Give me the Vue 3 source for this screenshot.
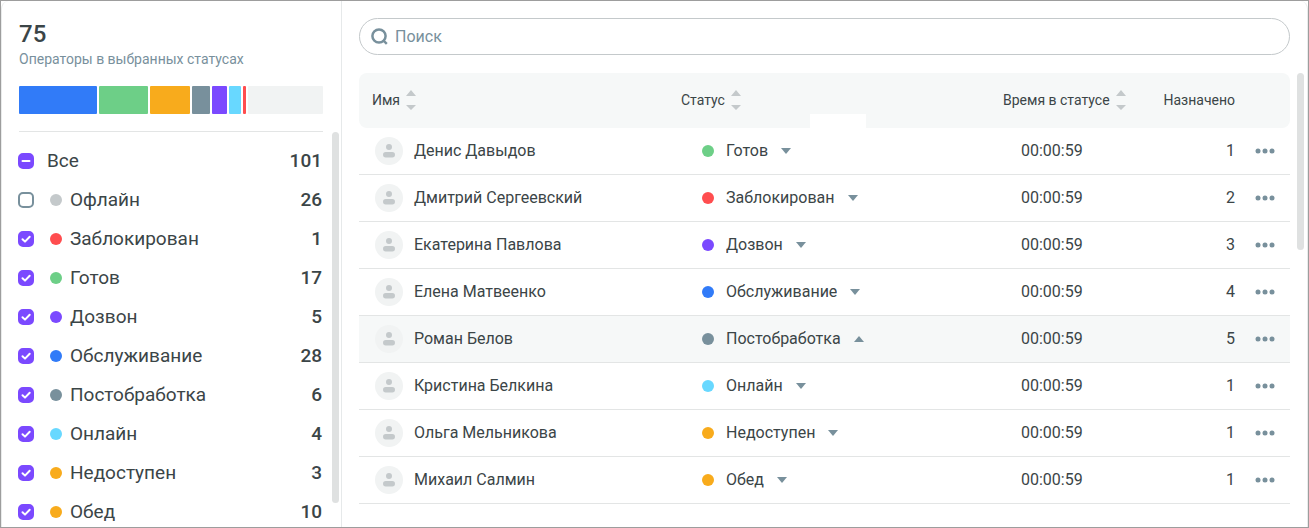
<script setup>
import { computed, reactive, ref } from 'vue'

const colors = {
  'Офлайн': '#c4c9cb',
  'Заблокирован': '#ff4d4f',
  'Готов': '#6dcf87',
  'Дозвон': '#7b49ff',
  'Обслуживание': '#317bf8',
  'Постобработка': '#78909c',
  'Онлайн': '#68d8ff',
  'Недоступен': '#f8ab1c',
  'Обед': '#f8ab1c'
}

const filters = reactive([
  { name: 'Офлайн', count: 26, on: false },
  { name: 'Заблокирован', count: 1, on: true },
  { name: 'Готов', count: 17, on: true },
  { name: 'Дозвон', count: 5, on: true },
  { name: 'Обслуживание', count: 28, on: true },
  { name: 'Постобработка', count: 6, on: true },
  { name: 'Онлайн', count: 4, on: true },
  { name: 'Недоступен', count: 3, on: true },
  { name: 'Обед', count: 10, on: true }
])

const segments = [
  { color: '#317bf8', share: 78 },
  { color: '#6dcf87', share: 49 },
  { color: '#f8ab1c', share: 41 },
  { color: '#78909c', share: 18 },
  { color: '#7b49ff', share: 15 },
  { color: '#68d8ff', share: 12 },
  { color: '#ff4d4f', share: 3 },
  { color: '#f1f3f3', share: 75 }
]

const rows = reactive([
  { name: 'Денис Давыдов', status: 'Готов', count: 1 },
  { name: 'Дмитрий Сергеевский', status: 'Заблокирован', count: 2 },
  { name: 'Екатерина Павлова', status: 'Дозвон', count: 3 },
  { name: 'Елена Матвеенко', status: 'Обслуживание', count: 4 },
  { name: 'Роман Белов', status: 'Постобработка', count: 5, open: true },
  { name: 'Кристина Белкина', status: 'Онлайн', count: 1 },
  { name: 'Ольга Мельникова', status: 'Недоступен', count: 1 },
  { name: 'Михаил Салмин', status: 'Обед', count: 1 }
])

const query = ref('')
const allOn = computed(() => filters.every(f => f.on))
const someOn = computed(() => filters.some(f => f.on) && !allOn.value)
const visibleRows = computed(() =>
  rows.filter(r => r.name.toLowerCase().includes(query.value.toLowerCase()))
)
function toggleAll(event) {
  const on = event.target.checked
  filters.forEach(f => { f.on = on })
}
</script>

<template>
  <div class="page">
    <aside class="sidebar">
      <header class="summary">
        <h1>75</h1>
        <p>Операторы в выбранных статусах</p>
        <div class="bar">
          <span v-for="(s, i) in segments" :key="i" :style="{ flexGrow: s.share, background: s.color }"></span>
        </div>
      </header>
      <div class="filters">
        <ul>
          <li>
            <label class="filter">
              <span class="check">
                <input type="checkbox" :checked="allOn" :indeterminate="someOn" @change="toggleAll">
                <svg v-if="someOn || allOn" viewBox="0 0 16 16"><path :d="someOn ? 'M4.5 8h7' : 'M4.5 8.2 7 10.6 11.7 5.7'" /></svg>
              </span>
              <span class="label">Все</span>
              <b>101</b>
            </label>
          </li>
          <li v-for="f in filters" :key="f.name">
            <label class="filter">
              <span class="check">
                <input v-model="f.on" type="checkbox">
                <svg v-if="f.on" viewBox="0 0 16 16"><path d="M4.5 8.2 7 10.6 11.7 5.7" /></svg>
              </span>
              <i class="dot" :style="{ background: colors[f.name] }"></i>
              <span class="label">{{ f.name }}</span>
              <b>{{ f.count }}</b>
            </label>
          </li>
        </ul>
        <div class="track"><div class="thumb side-thumb"></div></div>
      </div>
    </aside>

    <main class="content">
      <label class="search">
        <svg viewBox="0 0 18 18"><circle cx="8" cy="8" r="6.6" /><path d="M12 12.2 15.8 15.8" /></svg>
        <input v-model="query" type="text" placeholder="Поиск" aria-label="Поиск">
      </label>
      <div class="list">
        <div class="table-wrap">
          <table>
            <colgroup>
              <col>
              <col>
              <col class="c-time">
              <col class="c-count">
              <col class="c-more">
            </colgroup>
            <thead>
              <tr>
                <th class="name-head"><button class="sort">Имя<svg viewBox="0 0 10 22"><path d="M0 7 5 1l5 6ZM0 16h10l-5 5Z" /></svg></button></th>
                <th class="status-head"><button class="sort">Статус<svg viewBox="0 0 10 22"><path d="M0 7 5 1l5 6ZM0 16h10l-5 5Z" /></svg></button></th>
                <th><button class="sort">Время в статусе<svg viewBox="0 0 10 22"><path d="M0 7 5 1l5 6ZM0 16h10l-5 5Z" /></svg></button></th>
                <th class="count">Назначено</th>
                <th></th>
              </tr>
            </thead>
            <tbody>
              <tr v-for="r in visibleRows" :key="r.name" :class="{ active: r.open }">
                <td>
                  <div class="person">
                    <svg viewBox="0 0 28 28"><circle class="disc" cx="14" cy="14" r="14" /><circle cx="14" cy="10" r="3" /><rect x="8" y="15" width="12" height="5.5" rx="2.75" /></svg>
                    {{ r.name }}
                  </div>
                </td>
                <td>
                  <label class="status">
                    <i class="dot" :style="{ background: colors[r.status] }"></i>
                    <select v-model="r.status" :aria-label="'Статус: ' + r.name">
                      <option v-for="f in filters" :key="f.name">{{ f.name }}</option>
                    </select>
                    <svg viewBox="0 0 10 6"><path :d="r.open ? 'M0 6 5 0l5 6Z' : 'M0 0h10L5 6Z'" /></svg>
                  </label>
                </td>
                <td class="time">00:00:59</td>
                <td class="count">{{ r.count }}</td>
                <td class="more">
                  <button :aria-label="'Действия: ' + r.name"><svg viewBox="0 0 20 6"><circle cx="3" cy="3" r="2.5" /><circle cx="10" cy="3" r="2.5" /><circle cx="17" cy="3" r="2.5" /></svg></button>
                </td>
              </tr>
            </tbody>
          </table>
        </div>
        <div class="track"><div class="thumb list-thumb"></div></div>
      </div>
    </main>
  </div>
</template>

<style>
body { background: #fff; }
</style>

<style scoped>
* { box-sizing: border-box; }
.page {
  display: flex;
  height: 100vh;
  border: 1px solid #9d9d9d;
  font-family: Roboto, "Liberation Sans", sans-serif;
  color: #3b4547;
  overflow: hidden;
}
button, input, select { font: inherit; color: inherit; border: 0; padding: 0; margin: 0; background: none; }
ul, h1, p { margin: 0; padding: 0; }
ul { list-style: none; flex: 1; }

.sidebar {
  display: flex;
  flex-direction: column;
  flex: 0 0 341px;
  border-left: 1px solid #e9ebeb;
  border-right: 1px solid #e6e9ea;
  border-top-left-radius: 8px;
}
.summary { margin: 0 18px 0 17px; padding-top: 19px; border-bottom: 1px solid #e3e5e5; }
h1 { font-size: 24px; line-height: 28px; font-weight: 500; }
.summary p { font-size: 14px; line-height: 22px; color: #78909c; }
.bar { display: flex; gap: 2px; height: 28px; margin: 16px 0 17px; }
.bar span { flex: 1 1 0; border-radius: 1px; }

.filters { display: flex; flex: 1; min-height: 0; }
.filters ul { padding: 9px 10px 0 16px; overflow: hidden; }
.filter { display: flex; align-items: center; height: 39px; font-size: 19px; line-height: 24px; cursor: pointer; }
.check { display: grid; width: 16px; height: 16px; margin-right: 13px; }
.check > * { grid-area: 1 / 1; width: 16px; height: 16px; }
.check input { appearance: none; border: 2px solid #78909c; border-radius: 5px; }
.check input:checked, .check input:indeterminate { background: #7b49ff; border-color: #7b49ff; }
.check svg { z-index: 1; pointer-events: none; fill: none; stroke: #fff; stroke-width: 2; stroke-linecap: round; stroke-linejoin: round; }
.dot { flex: none; width: 12px; height: 12px; border-radius: 50%; }
.filter .dot { margin: 0 8px 0 3px; }
.label { flex: 1; }
.filter b { font-weight: 500; }

.track { flex: none; width: 7px; }
.filters .track { margin-right: 2px; }
.thumb { border-radius: 4px; background: #dfe1e1; }
.side-thumb { height: 94%; }
.list-thumb { height: 39%; }

.content {
  display: flex;
  flex-direction: column;
  flex: 1;
  min-width: 0;
  padding: 17px 3px 0 17px;
  border-right: 1px solid #e9ebeb;
  border-top-right-radius: 8px;
}
.search {
  display: flex;
  align-items: center;
  gap: 6px;
  height: 37px;
  margin-right: 14px;
  padding: 0 11px;
  border: 1px solid #c4c9cb;
  border-radius: 19px;
  color: #78909c;
}
.search svg { width: 18px; height: 18px; fill: none; stroke: #78909c; stroke-width: 2.5; }
.search input { flex: 1; font-size: 16px; outline: 0; }
.search input::placeholder { color: #78909c; opacity: 1; }

.list { display: flex; flex: 1; gap: 7px; min-height: 0; margin-top: 18px; }
.table-wrap { flex: 1; min-width: 0; }
table { width: 100%; table-layout: fixed; border-spacing: 0; }
.c-time { width: 143px; }
.c-count { width: 89px; }
.c-more { width: 55px; }
th { height: 55px; padding: 0 0 2px; font-size: 14px; line-height: 20px; font-weight: 400; text-align: left; background: #f6f8f8; }
th:first-child { border-radius: 8px 0 0 8px; }
th:last-child { border-radius: 0 8px 8px 0; }
.name-head { padding-left: 13px; }
.status-head { position: relative; }
.status-head::after {
  content: "";
  position: absolute;
  left: 40%;
  bottom: 0;
  width: 56px;
  height: 14px;
  background: #fff;
}
.sort { display: flex; align-items: center; gap: 6px; }
.sort svg { width: 10px; height: 22px; fill: #c4c9cb; }
td { height: 47px; padding: 0; font-size: 16px; line-height: 24px; border-bottom: 1px solid #e3e5e5; }
.active td { background: #f6f8f8; }
.person { display: flex; align-items: center; gap: 11px; padding-left: 16px; }
.person svg { width: 28px; height: 28px; fill: #c4c9cb; }
.person .disc { fill: #f1f3f3; }
.status { display: flex; align-items: center; padding-left: 21px; }
.status select { appearance: none; field-sizing: content; height: 24px; margin: 0 13px 0 12px; }
.status svg { width: 10px; height: 6px; fill: #78909c; }
.time { padding-left: 18px; }
.count { text-align: right; }
.more { padding-left: 20px; }
.more button { display: flex; }
.more svg { width: 20px; height: 6px; fill: #78909c; }
</style>
